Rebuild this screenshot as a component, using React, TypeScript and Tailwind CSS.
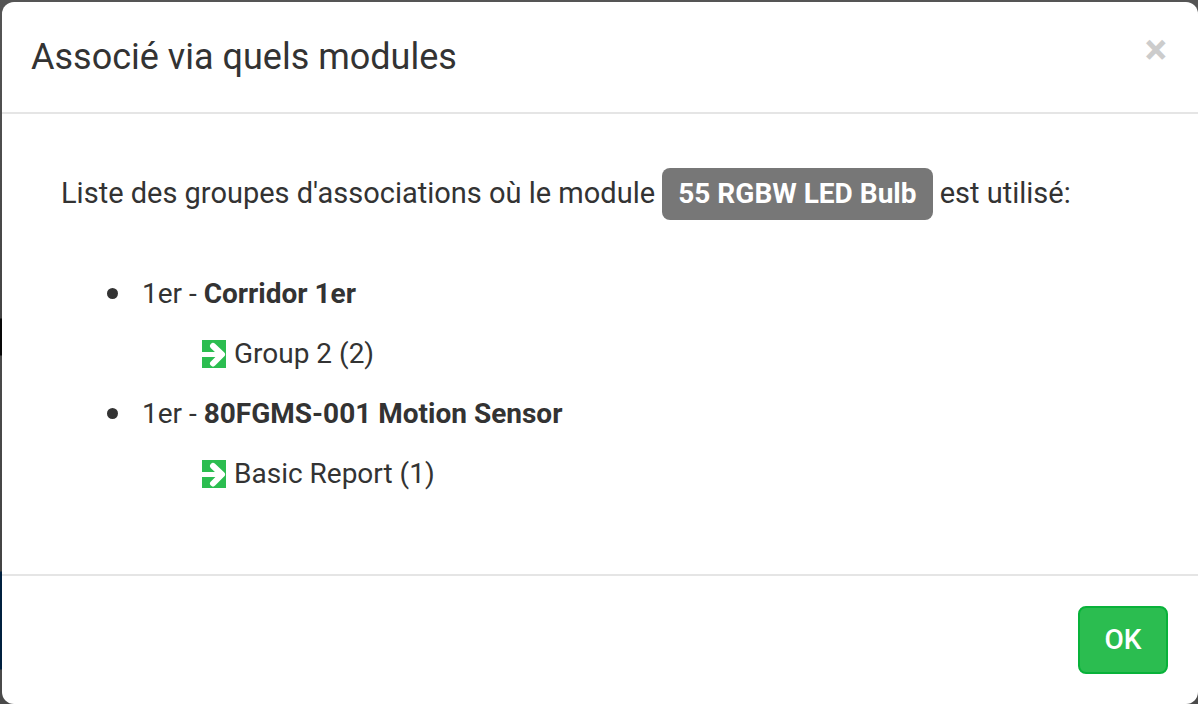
const groups = [
  { room: "1er", name: "Corridor 1er", entries: ["Group 2 (2)"] },
  { room: "1er", name: "80FGMS-001 Motion Sensor", entries: ["Basic Report (1)"] },
];

function ArrowIcon() {
  return (
    <svg viewBox="0 0 24 28" className="h-7 w-6 shrink-0" aria-hidden="true">
      <rect width="24" height="28" fill="#2bbd50" />
      <path d="M0 14.500H18" fill="none" stroke="#fff" strokeWidth="5" />
      <path d="M11 6L20 14.500L11 23.500" fill="none" stroke="#fff" strokeWidth="6" strokeLinecap="round" strokeLinejoin="round" />
    </svg>
  );
}

export default function App() {
  return (
    <div className="flex min-h-screen flex-col bg-[#4a4a4a] bg-[linear-gradient(#555,#444_318px,#080808_319px,#080808_355px,#4a4a4a_356px,#444_571px,#00203f_572px,#00203f_669px,#4a4a4a_670px)] pt-0.5 pl-0.5 font-['Roboto',sans-serif] text-[#333]">
      <div role="dialog" aria-labelledby="title" className="flex grow flex-col rounded-xl bg-white">
        <header className="flex items-start justify-between border-b-2 border-[#e5e5e5] pt-7 pr-[31px] pb-7 pl-[29px]">
          <h1 id="title" className="text-[36px] leading-[54px]">Associé via quels modules</h1>
          <button type="button" aria-label="Fermer" className="text-[42px] leading-[40px] font-bold text-[#ccc]">×</button>
        </header>
        <main className="grow px-[59px] pt-[49px] text-[28px] leading-[60px]">
          <p className="text-[29px]">
            Liste des groupes d'associations où le module{" "}
            <span className="inline-block rounded-lg bg-[#777] px-4 text-[28px] leading-[52px] font-bold text-white">55 RGBW LED Bulb</span> est utilisé:
          </p>
          <ul className="mt-[41px] pl-20">
            {groups.map((g) => (
              <li key={g.name}>
                <div className="flex items-center">
                  <span className="mr-6 mb-0.5 -ml-[34px] size-[11px] rounded-full bg-[#333]" />
                  <p>{g.room} - <strong className="font-bold">{g.name}</strong></p>
                </div>
                <ul className="pl-[61px]">
                  {g.entries.map((e) => (
                    <li key={e} className="flex items-center gap-2"><ArrowIcon />{e}</li>
                  ))}
                </ul>
              </li>
            ))}
          </ul>
        </main>
        <footer className="flex justify-end border-t-2 border-[#e5e5e5] p-[30px]">
          <button type="button" className="h-[68px] w-[90px] rounded-lg border-2 border-[#08b23a] bg-[#2bbd50] text-[28px] font-medium text-white">OK</button>
        </footer>
      </div>
    </div>
  );
}
